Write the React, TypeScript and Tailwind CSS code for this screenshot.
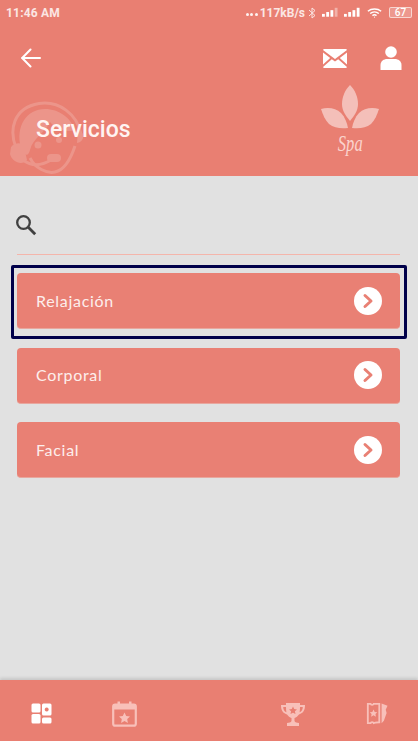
import React from "react";

const rows = ["Relajación", "Corporal", "Facial"];

function Chevron() {
  return (
    <span className="flex h-[28px] w-[28px] items-center justify-center rounded-full bg-white">
      <svg width="14" height="16" viewBox="0 0 14 16" fill="none">
        <path d="M4 2.5 L10 8 L4 13.5" stroke="#e98074" strokeWidth="3" strokeLinecap="round" strokeLinejoin="round" />
      </svg>
    </span>
  );
}

function StatusBar() {
  return (
    <div className="flex h-[25px] items-center justify-between pl-[6px] pr-[6px] text-[12px] font-medium text-[#fbe6e3]" style={{ fontFamily: "Roboto, sans-serif" }}>
      <span className="font-bold tracking-[0.2px]">11:46 AM</span>
      <div className="flex items-center">
        <span className="mr-[2px] flex gap-[1.5px] pt-[4px]">
          <i className="h-[3px] w-[3px] rounded-full bg-white/90" />
          <i className="h-[3px] w-[3px] rounded-full bg-white/90" />
          <i className="h-[3px] w-[3px] rounded-full bg-white/90" />
        </span>
        <span className="font-bold">117kB/s</span>
        <svg className="ml-[3px]" width="8" height="12" viewBox="0 0 8 12" fill="none" stroke="#fbe6e3" strokeWidth="1">
          <path d="M1 3 L7 8.5 L4 11 V1 L7 3.5 L1 9" />
        </svg>
        <svg className="ml-[6px]" width="16" height="11" viewBox="0 0 17 11" fill="#fff">
          <rect x="0" y="7" width="3" height="3" /><rect x="4.5" y="5" width="3" height="5" /><rect x="9" y="3" width="3" height="7" /><rect x="13.5" y="0.5" width="3" height="9.5" opacity="0.4" />
        </svg>
        <svg className="ml-[6px]" width="16" height="11" viewBox="0 0 17 11" fill="#fff">
          <rect x="0" y="7" width="3" height="3" /><rect x="4.5" y="5" width="3" height="5" /><rect x="9" y="3" width="3" height="7" /><rect x="13.5" y="0.5" width="3" height="9.5" />
        </svg>
        <svg className="ml-[7px]" width="15" height="12" viewBox="0 0 17 12" fill="none" stroke="#fff" strokeWidth="1.7">
          <path d="M1 4 C5 0.6 12 0.6 16 4" /><path d="M3.6 6.6 C6.4 4.4 10.6 4.4 13.4 6.6" /><path d="M6.2 9 C7.4 8 9.6 8 10.8 9" />
          <circle cx="8.5" cy="10.6" r="0.7" fill="#fff" stroke="none" />
        </svg>
        <span className="ml-[7px] flex h-[11px] w-[23px] items-center justify-center rounded-[2px] border border-white/60 bg-white/20 text-[10px] font-medium leading-none text-white">67</span>
      </div>
    </div>
  );
}

function Agent() {
  return (
    <svg className="absolute left-[9px] top-[100px]" width="76" height="76" viewBox="0 0 76 76" fill="none">
      <g fill="#fff" opacity="0.17">
        <path d="M7 48 C0 30 4 8 30 3.5 C50 0.5 68 14 72 34" stroke="#fff" strokeWidth="3" strokeLinecap="round" fill="none" />
        <path d="M12 48 C6 26 18 9 36 9 C50 9 62 18 66 30 C56 33 46 28 41 22 C35 34 24 38 21 50 C20 54 18 56 16 54 Z" />
        <path d="M2 47 C7 42 13 42 15 47 L18 60 C13 66 3 62 1 54 Z" />
        <path d="M69 30 C76 32 76 42 68 43 Z" />
        <path d="M21 58 C26 68 38 74 46 72 C56 70 62 58 66 46" stroke="#fff" strokeWidth="3" fill="none" />
        <path d="M14 60 C22 66 32 66 42 60" stroke="#fff" strokeWidth="3" fill="none" />
        <rect x="38" y="54" width="14" height="8" rx="4" />
        <circle cx="29" cy="45" r="3.5" />
        <circle cx="50" cy="40" r="3" />
      </g>
    </svg>
  );
}

function SpaLogo() {
  return (
    <div className="absolute left-[321px] top-[84px] flex w-[58px] flex-col items-center">
      <svg width="58" height="45" viewBox="0 0 58 45" fill="#fff" opacity="0.5">
        <path d="M29 1 C34 6 37 13 37 20 C37 27 33 32 29 37 C25 32 21 27 21 20 C21 13 24 6 29 1 Z" />
        <path d="M0 25 C7 23 15 24 20 29 C24 33 26 39 27 44 C20 45 13 44 8 40 C4 36 2 31 0 25 Z" />
        <path d="M58 25 C51 23 43 24 38 29 C34 33 32 39 31 44 C38 45 45 44 50 40 C54 36 56 31 58 25 Z" />
      </svg>
      <span className="mt-[3px] scale-x-[0.72] text-[23px] italic leading-[24px] text-[#fbd3cd]" style={{ fontFamily: "'Liberation Serif', serif" }}>Spa</span>
    </div>
  );
}

function NavIcons() {
  const dim = "#f8c0b9";
  return (
    <div className="flex h-full items-center pt-[6px]">
      <svg className="ml-[31px]" width="21" height="21" viewBox="0 0 21 21" fill="#fff">
        <rect x="0.5" y="0.5" width="9" height="9" rx="1.5" />
        <rect x="0.5" y="11" width="9" height="9.5" rx="1.5" />
        <path d="M12.5 0.5 h6.5 a1.5 1.5 0 0 1 1.5 1.5 v9 a1.5 1.5 0 0 1 -1.5 1.5 h-6.5 a1.5 1.5 0 0 1 -1.5 -1.5 v-9 a1.5 1.5 0 0 1 1.5 -1.5 Z M15.7 4.5 a2 2 0 1 0 0.01 0 Z" fillRule="evenodd" />
        <rect x="11" y="14.5" width="9.5" height="6" rx="1.5" />
      </svg>
      <svg className="ml-[60px]" width="25" height="26" viewBox="0 0 25 26" fill="none">
        <rect x="1.2" y="3.5" width="22.6" height="21.2" rx="2" stroke={dim} strokeWidth="2.2" />
        <rect x="1" y="3.5" width="23" height="5" fill={dim} />
        <rect x="5.5" y="0.5" width="2.5" height="5" fill={dim} />
        <rect x="17" y="0.5" width="2.5" height="5" fill={dim} />
        <path d="M12.5 11.5 l1.7 3.5 3.8 .5 -2.8 2.6 .7 3.8 -3.4 -1.9 -3.4 1.9 .7 -3.8 -2.8 -2.6 3.8 -.5 Z" fill={dim} />
      </svg>
      <svg className="ml-[144px]" width="24" height="24" viewBox="0 0 24 24" fill={dim} fillRule="evenodd">
        <path d="M5 1 H19 V3 H24 C24 8 22.5 11 18 12.5 C17 14 15 15.5 13.5 16 V19 C14 20.5 16 20.5 18 21 V24 H6 V21 C8 20.5 10 20.5 10.5 19 V16 C9 15.5 7 14 6 12.5 C1.5 11 0 8 0 3 H5 Z M2.2 5 C2.3 7.5 3.2 9.3 5.4 10.3 C5.1 8.8 5 7 5 5 Z M21.8 5 H19 C19 7 18.9 8.8 18.6 10.3 C20.8 9.3 21.7 7.5 21.8 5 Z M12 4.5 L10.8 7.1 8 7.4 10.1 9.3 9.5 12.1 12 10.7 14.5 12.1 13.9 9.3 16 7.4 13.2 7.1 Z" />
      </svg>
      <svg className="ml-[61px]" width="22" height="23" viewBox="0 0 24 24" fill="none">
        <path d="M2 1.5 H5 C5.3 3 8 3 8.4 1.5 H14.5 V21.5 C11 21.5 11 22 8.4 22.5 C8 21 5.3 21 5 22.5 H2 Z" stroke={dim} strokeWidth="2" />
        <path d="M8.2 7.5 L9.5 10.3 12.3 10.6 10.3 12.6 10.8 15.5 8.2 14 5.6 15.5 6.1 12.6 4.1 10.6 6.9 10.3 Z" fill={dim} />
        <path d="M17 1 L23.5 3.5 L21.5 8 L22.5 11.5 L19.5 20 L17 22.5 Z" fill={dim} />
      </svg>
    </div>
  );
}

export default function App() {
  return (
    <div className="flex h-[741px] w-[418px] flex-col overflow-hidden bg-[#e1e1e1]">
      <header className="relative h-[176px] shrink-0 bg-[#e97f72] text-white">
        <Agent />
        <SpaLogo />
        <div className="relative">
          <StatusBar />
          <div className="flex h-[66px] items-center pl-[21px] pr-[16px]">
            <svg width="20" height="20" viewBox="0 0 20 20" fill="none" stroke="#fff" strokeWidth="2" strokeLinecap="round">
              <path d="M1.5 10 H19" /><path d="M9.5 1.5 L1.2 10 L9.5 18.5" />
            </svg>
            <svg className="ml-auto" width="24" height="19" viewBox="0 0 24 19" fill="#fff">
              <path d="M1.5 0 H22.5 A1.5 1.5 0 0 1 24 1 L12 10 L0 1 A1.5 1.5 0 0 1 1.5 0 Z" />
              <path d="M0 3.5 L7.2 9 L0 15.5 Z" />
              <path d="M24 3.5 L16.8 9 L24 15.5 Z" />
              <path d="M8.8 10.2 L12 12.6 L15.2 10.2 L24 18 A1.5 1.5 0 0 1 22.5 19 H1.5 A1.5 1.5 0 0 1 0 18 Z" />
            </svg>
            <svg className="ml-[33px]" width="22" height="24" viewBox="0 0 22 24" fill="#fff">
              <circle cx="11" cy="6" r="5.8" />
              <path d="M0.5 24 V19 C0.5 15 4 13 7 13 H15 C18 13 21.5 15 21.5 19 V24 Z" />
            </svg>
          </div>
          <h1 className="ml-[36px] mt-[24px] text-[23px] font-medium leading-[30px] text-[#fff4f2]" style={{ fontFamily: "Roboto, sans-serif" }}>Servicios</h1>
        </div>
      </header>

      <main className="flex-1 pl-[17px] pr-[18px]">
        <div className="h-[79px] border-b border-[#f4b5ab] pt-[38px]">
          <svg width="22" height="22" viewBox="0 0 22 22" fill="none" stroke="#404040" strokeWidth="2.3" className="-ml-[2px]">
            <circle cx="8.5" cy="8.5" r="6.3" /><path d="M13 13 L20.2 20.2" strokeWidth="2.8" />
          </svg>
        </div>
        <ul className="mt-[18px] flex flex-col gap-[18.7px]">
          {rows.map((r, i) => (
            <li key={r} className="relative">
              {i === 0 && <div className="absolute -bottom-[10px] -left-[6px] -right-[7px] -top-[8px] rounded-[2px] border-[3px] border-[#00004a]" />}
              <div className="flex h-[56px] items-center justify-between rounded-[4px] border-b border-[#e8a79e] bg-[#e98074] pl-[19px] pr-[18px]">
                <span className="text-[16px] tracking-[0.7px] text-[#fdeeec]" style={{ fontFamily: "Lato, sans-serif" }}>{r}</span>
                <Chevron />
              </div>
            </li>
          ))}
        </ul>
      </main>

      <footer className="h-[61px] shrink-0 bg-[#e97f72] shadow-[0_-2px_3px_rgba(0,0,0,0.12)]">
        <NavIcons />
      </footer>
    </div>
  );
}
